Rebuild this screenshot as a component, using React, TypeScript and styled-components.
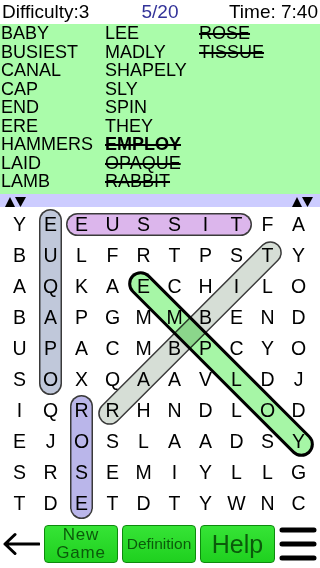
import React from "react";
import styled, { createGlobalStyle } from "styled-components";

const GlobalStyle = createGlobalStyle`
  html, body { margin: 0; padding: 0; background: #ffffff; }
  body { font-family: "Liberation Sans", Arial, sans-serif; }
  #root { width: 320px; height: 568px; overflow: hidden; }
`;

const Screen = styled.div`
  width: 320px;
  height: 568px;
  display: flex;
  flex-direction: column;
  background: #ffffff;
  color: #000000;
  font-family: "Liberation Sans", Arial, sans-serif;
`;

const Header = styled.header`
  height: 24px;
  flex: none;
  display: grid;
  grid-template-columns: 1fr auto 1fr;
  align-items: center;
  padding: 0 2px;
  font-size: 19px;
  line-height: 24px;
`;

const HeaderText = styled.span<{ $align: "left" | "center" | "right"; $color?: string }>`
  text-align: ${(p) => p.$align};
  color: ${(p) => p.$color ?? "#000"};
  white-space: nowrap;
`;

const WordList = styled.ul`
  flex: none;
  height: 170px;
  box-sizing: border-box;
  margin: 0;
  padding: 0 0 0 1px;
  list-style: none;
  background: #aafcaa;
  display: grid;
  grid-template-columns: 104px 94px 1fr;
  grid-template-rows: repeat(9, 18.5px);
  grid-auto-flow: column;
  font-size: 18px;
  line-height: 18.5px;
`;

const Word = styled.li<{ $found: boolean; $recent: boolean }>`
  white-space: nowrap;
  text-decoration: ${(p) => (p.$found ? "line-through" : "none")};
  text-decoration-thickness: 2px;
  font-weight: ${(p) => (p.$recent ? 700 : 400)};
`;

const Strip = styled.div`
  flex: none;
  height: 13px;
  background: #ccccff;
  display: flex;
  justify-content: space-between;
  align-items: flex-end;
  padding: 0 7px 0 5px;
`;

const Board = styled.div`
  position: relative;
  flex: none;
  height: 312px;
  box-sizing: border-box;
  padding: 2px 0 0 4px;
`;

const Overlay = styled.svg`
  position: absolute;
  left: 0;
  top: 0;
  width: 320px;
  height: 312px;
`;

const MultiplyGroup = styled.g`
  mix-blend-mode: multiply;
`;

const LetterGrid = styled.div`
  position: relative;
  display: grid;
  grid-template-columns: repeat(10, 31px);
  grid-auto-rows: 31px;
  font-size: 19.5px;
`;

const Cell = styled.span`
  display: flex;
  align-items: center;
  justify-content: center;
  line-height: 31px;
`;

const Toolbar = styled.nav`
  flex: none;
  height: 49px;
  box-sizing: border-box;
  display: flex;
  align-items: flex-start;
  gap: 4px;
  padding: 6px 0 0 2px;
`;

const IconButton = styled.button`
  width: 38px;
  height: 38px;
  padding: 0;
  border: none;
  background: transparent;
  display: flex;
  align-items: center;
  justify-content: center;
`;

const GreenButton = styled.button<{ $w: number; $size: number; $spacing?: number }>`
  width: ${(p) => p.$w}px;
  height: 38px;
  padding: 0;
  box-sizing: border-box;
  border: 1px solid #0d8a0d;
  border-radius: 4px;
  background: linear-gradient(#36e436, #1fd01f);
  color: #0b5a0b;
  font-family: "Liberation Sans", Arial, sans-serif;
  font-size: ${(p) => p.$size}px;
  line-height: ${(p) => Math.round(p.$size * 1.05)}px;
  letter-spacing: ${(p) => p.$spacing ?? 0}px;
  display: flex;
  align-items: center;
  justify-content: center;
  text-align: center;
`;

const GRID = [
  "YEEUSSITFA",
  "BULFRTPSTY",
  "AQKAECHILO",
  "BAPGMMBEND",
  "UPACMBPCYO",
  "SOXQAAVLDJ",
  "IQRRHNDLOD",
  "EJOSLAADSY",
  "SRSEMIYLLG",
  "TDETDTYWNC",
];

const WORDS: { w: string; found?: boolean; recent?: boolean }[] = [
  { w: "BABY" },
  { w: "BUSIEST" },
  { w: "CANAL" },
  { w: "CAP" },
  { w: "END" },
  { w: "ERE" },
  { w: "HAMMERS" },
  { w: "LAID" },
  { w: "LAMB" },
  { w: "LEE" },
  { w: "MADLY" },
  { w: "SHAPELY" },
  { w: "SLY" },
  { w: "SPIN" },
  { w: "THEY" },
  { w: "EMPLOY", found: true, recent: true },
  { w: "OPAQUE", found: true },
  { w: "RABBIT", found: true },
  { w: "ROSE", found: true },
  { w: "TISSUE", found: true },
];

type Cap = { from: [number, number]; to: [number, number]; fill: string; recent?: boolean };

const CAPSULES: Cap[] = [
  { from: [0, 1], to: [5, 1], fill: "#c0c8da" },
  { from: [0, 2], to: [0, 7], fill: "#dcb6ec" },
  { from: [6, 2], to: [9, 2], fill: "#bab6ea" },
  { from: [1, 8], to: [6, 3], fill: "#d6ded6" },
  { from: [2, 4], to: [7, 9], fill: "#a6f6a6", recent: true },
];

const cx = (c: number) => 19.5 + 31 * c;
const cy = (r: number) => 17.5 + 31 * r;

function Capsule({ cap }: { cap: Cap }) {
  let x1 = cx(cap.from[1]);
  let y1 = cy(cap.from[0]);
  let x2 = cx(cap.to[1]);
  let y2 = cy(cap.to[0]);
  const len = Math.hypot(x2 - x1, y2 - y1);
  const ux = (x2 - x1) / len;
  const uy = (y2 - y1) / len;
  const ext = 4;
  x1 -= ux * ext;
  y1 -= uy * ext;
  x2 += ux * ext;
  y2 += uy * ext;
  const outer = cap.recent ? 25 : 23;
  const inner = cap.recent ? 19 : 20;
  return (
    <MultiplyGroup>
      <line x1={x1} y1={y1} x2={x2} y2={y2} stroke={cap.recent ? "#000" : "#3a3a3a"} strokeWidth={outer} strokeLinecap="round" />
      <line x1={x1} y1={y1} x2={x2} y2={y2} stroke={cap.fill} strokeWidth={inner} strokeLinecap="round" />
    </MultiplyGroup>
  );
}

function Arrows() {
  return (
    <svg width="21" height="10" viewBox="0 0 21 10">
      <polygon points="0,10 5,0 10,10" fill="#000" />
      <polygon points="10,0 21,0 15.5,10" fill="#000" />
    </svg>
  );
}

export default function App() {
  return (
    <>
      <GlobalStyle />
      <Screen>
        <Header>
          <HeaderText $align="left">Difficulty:3</HeaderText>
          <HeaderText $align="center" $color="#333399">5/20</HeaderText>
          <HeaderText $align="right">Time: 7:40</HeaderText>
        </Header>
        <WordList>
          {WORDS.map((w) => (
            <Word key={w.w} $found={!!w.found} $recent={!!w.recent}>
              {w.w}
            </Word>
          ))}
        </WordList>
        <Strip>
          <Arrows />
          <Arrows />
        </Strip>
        <Board>
          <Overlay viewBox="0 0 320 312">
            {CAPSULES.map((c, i) => (
              <Capsule key={i} cap={c} />
            ))}
          </Overlay>
          <LetterGrid>
            {GRID.flatMap((row, r) =>
              row.split("").map((ch, c) => <Cell key={`${r}-${c}`}>{ch}</Cell>)
            )}
          </LetterGrid>
        </Board>
        <Toolbar>
          <IconButton aria-label="Back">
            <svg width="38" height="38" viewBox="0 0 38 38">
              <path d="M3 19 H37 M13 9.5 L3 19 L13 28.5" stroke="#000" strokeWidth="3" fill="none" strokeLinecap="round" strokeLinejoin="round" />
            </svg>
          </IconButton>
          <GreenButton $w={74} $size={17} $spacing={0.8}>
            New
            <br />
            Game
          </GreenButton>
          <GreenButton $w={74} $size={15.5}>Definition</GreenButton>
          <GreenButton $w={75} $size={25}>Help</GreenButton>
          <IconButton aria-label="Menu">
            <svg width="38" height="38" viewBox="0 0 38 38">
              <path d="M3 5 H35 M3 19 H35 M3 33 H35" stroke="#000" strokeWidth="5" strokeLinecap="round" />
            </svg>
          </IconButton>
        </Toolbar>
      </Screen>
    </>
  );
}
